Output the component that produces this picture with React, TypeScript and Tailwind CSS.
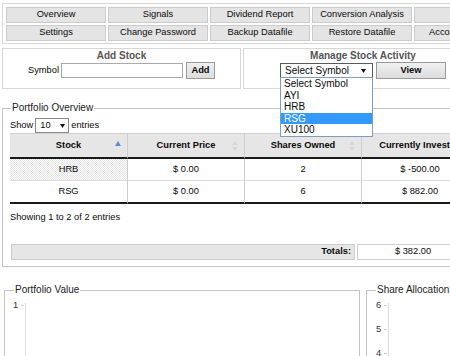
import React from "react";

const navRows = [
  ["Overview", "Signals", "Dividend Report", "Conversion Analysis", ""],
  ["Settings", "Change Password", "Backup Datafile", "Restore Datafile", "Account Settings"],
];

const holdings = [
  { stock: "HRB", price: "$ 0.00", shares: "2", invested: "$ -500.00" },
  { stock: "RSG", price: "$ 0.00", shares: "6", invested: "$ 882.00" },
];

const symbols = ["Select Symbol", "AYI", "HRB", "RSG", "XU100"];

function SortBoth() {
  return (
    <svg width="6" height="10" viewBox="0 0 6 10" className="shrink-0">
      <path d="M3 0 L6 4 L0 4 Z" fill="#d6d6d6" />
      <path d="M3 10 L6 6 L0 6 Z" fill="#d6d6d6" />
    </svg>
  );
}

function SortUp() {
  return (
    <svg width="6" height="5" viewBox="0 0 6 5" className="shrink-0">
      <path d="M3 0 L6 5 L0 5 Z" fill="#5b8bd0" />
    </svg>
  );
}

function Caret() {
  return (
    <svg width="5" height="4" viewBox="0 0 5 4">
      <path d="M0 0 L5 0 L2.5 4 Z" fill="#111" />
    </svg>
  );
}

export default function App() {
  return (
    <div className="relative w-[450px] h-[356px] overflow-hidden bg-white font-['Liberation_Sans',Arial,sans-serif] text-[9.3px] text-[#0a0a0a]">
      {/* Menu */}
      <div className="ml-[2px] mt-[3px] w-[560px] border border-[#d6d6d6] pl-[3px] pt-[3px] pb-[2px]">
        <div className="grid grid-cols-[repeat(5,100px)] gap-[2px]">
          {navRows.flat().map((label, i) => (
            <div
              key={i}
              className="h-[16px] flex items-center justify-center whitespace-nowrap bg-[#e4e4e4] border border-[#cbcbcb]"
            >
              {label}
            </div>
          ))}
        </div>
      </div>

      {/* Stock panels */}
      <div className="mt-[4px] ml-[2px] flex gap-[2px]">
        <div className="w-[239px] h-[41px] shrink-0 border border-[#d6d6d6]">
          <div className="text-center font-bold text-[10px] leading-[12px] text-[#555] pt-[1px]">Add Stock</div>
          <div className="flex items-center justify-center">
            <span className="mr-[2px]">Symbol</span>
            <div className="w-[122px] h-[15px] border border-[#a9a9a9] bg-white" />
            <button className="ml-[3px] w-[29px] h-[17px] border border-[#9a9a9a] bg-[linear-gradient(#f0f0f0,#dcdcdc)] font-bold text-[9.3px]">
              Add
            </button>
          </div>
        </div>
        <div className="w-[240px] h-[41px] shrink-0 border border-[#d6d6d6]">
          <div className="text-center font-bold text-[10px] leading-[12px] text-[#555] pt-[1px]">Manage Stock Activity</div>
          <div className="flex items-center justify-center">
            <div className="relative">
              <div className="w-[93px] h-[15px] border border-[#5a5a5a] bg-white flex items-center justify-between pl-[4px] pr-[6px] text-[10px]">
                <span>Select Symbol</span>
                <Caret />
              </div>
              <div className="absolute left-0 top-[14px] z-10 w-[93px] border border-[#7f9db9] bg-white text-[10px]">
                {symbols.map((s) => (
                  <div
                    key={s}
                    className={
                      s === "RSG"
                        ? "h-[11.5px] leading-[11.5px] pl-[3px] bg-[#3399ff] text-white"
                        : "h-[11.5px] leading-[11.5px] pl-[3px]"
                    }
                  >
                    {s}
                  </div>
                ))}
              </div>
            </div>
            <button className="ml-[3px] w-[70px] h-[17px] border border-[#9a9a9a] bg-[linear-gradient(#f0f0f0,#dcdcdc)] font-bold text-[9.3px]">
              View
            </button>
          </div>
        </div>
      </div>

      {/* Portfolio overview */}
      <fieldset className="ml-[2px] mt-[13px] w-[560px] border border-[#c4c4c4] pl-[7px] pb-[6px]">
        <legend className="ml-[1px] px-[1px] text-[10px] leading-[12px] text-[#222]">Portfolio Overview</legend>
        <div className="flex items-center h-[15px] mt-[4px]">
          <span>Show</span>
          <div className="mx-[2px] w-[34px] h-[15px] border border-[#8a8a8a] flex items-center justify-between pl-[4px] pr-[3px]">
            <span>10</span>
            <Caret />
          </div>
          <span>entries</span>
        </div>

        <div className="grid grid-cols-[118px_117px_117px_117px]">
          {["Stock", "Current Price", "Shares Owned", "Currently Invested"].map((h, i) => (
            <div
              key={h}
              className="relative h-[26px] flex items-center justify-center font-bold bg-[#e6e6e6] border-t border-t-[#d0d0d0] border-r border-r-[#cdcdcd] border-b-2 border-b-[#1a1a1a]"
            >
              {h}
              {i < 3 && (
                <span className="absolute right-[6px] top-[7px]">{i === 0 ? <SortUp /> : <SortBoth />}</span>
              )}
            </div>
          ))}
          {holdings.map((r, ri) => (
            <React.Fragment key={r.stock}>
              <div
                className={
                  ri === 0
                    ? "h-[22px] flex items-center justify-center border-r border-r-[#cdcdcd] border-b border-b-[#dcdcdc] bg-[repeating-conic-gradient(#e2e2e2_0%_25%,#ffffff_0%_50%)] bg-[length:2px_2px]"
                    : "h-[23px] flex items-center justify-center border-r border-r-[#cdcdcd] border-b-2 border-b-[#1a1a1a]"
                }
              >
                {r.stock}
              </div>
              {[r.price, r.shares, r.invested].map((v, ci) => (
                <div
                  key={ci}
                  className={
                    ri === 0
                      ? "h-[22px] flex items-center justify-center border-r border-r-[#cdcdcd] border-b border-b-[#dcdcdc]"
                      : "h-[23px] flex items-center justify-center border-r border-r-[#cdcdcd] border-b-2 border-b-[#1a1a1a]"
                  }
                >
                  {v}
                </div>
              ))}
            </React.Fragment>
          ))}
        </div>

        <div className="mt-[8px] leading-[11px]">Showing 1 to 2 of 2 entries</div>

        <div className="mt-[21px] ml-[1px] flex gap-[2px]">
          <div className="w-[344px] h-[16px] border border-[#cccccc] bg-[#e6e6e6] flex items-center justify-end pr-[3px] font-bold">
            Totals:
          </div>
          <div className="w-[112px] h-[16px] border border-[#cccccc] flex items-center justify-center">$ 382.00</div>
        </div>
      </fieldset>

      {/* Charts */}
      <div className="mt-[17px] flex gap-[6px] ml-[4px]">
        <fieldset className="w-[356px] h-[80px] shrink-0 border border-[#c4c4c4] pl-[8px]">
          <legend className="ml-[1px] px-[1px] text-[10px] leading-[12px] text-[#222]">Portfolio Value</legend>
          <div className="flex mt-[4px]">
            <div className="w-[5px] text-[#333] leading-[11px]">1</div>
            <div className="w-[3px] h-px bg-[#cccccc] mt-[5px] ml-[3px]" />
            <div className="ml-[1px] mt-[3px] h-[60px] border-l border-[#dddddd]" />
          </div>
        </fieldset>
        <fieldset className="w-[200px] h-[80px] shrink-0 border border-[#c4c4c4] pl-[9px]">
          <legend className="px-[1px] text-[10px] leading-[12px] text-[#222]">Share Allocation</legend>
          <div className="flex mt-[4px]">
            <div className="flex flex-col">
              {["6", "5", "4"].map((n) => (
                <div key={n} className="h-[24px] flex">
                  <div className="w-[5px] text-[#333] leading-[11px]">{n}</div>
                  <div className="w-[3px] h-px bg-[#cccccc] mt-[5px] ml-[3px]" />
                </div>
              ))}
            </div>
            <div className="ml-[1px] mt-[3px] h-[60px] border-l border-[#dddddd]" />
          </div>
        </fieldset>
      </div>
    </div>
  );
}
